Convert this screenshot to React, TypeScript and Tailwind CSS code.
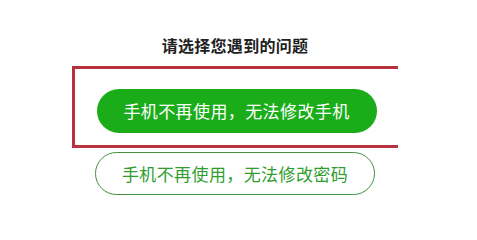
export default function App() {
  return (
    <div
      className="h-[235px] w-[477px] bg-white"
      style={{ fontFamily: '"Noto Sans CJK SC", "Noto Sans", sans-serif' }}
    >
      <div className="ml-[72px] flex w-[326px] flex-col items-center">
        <h2 className="mt-[35px] text-[16px] font-bold leading-[20px] tracking-[0.3px] text-[#222]">
          请选择您遇到的问题
        </h2>

        <div className="mt-[11px] flex w-full justify-center border-y-[3px] border-l-[3px] border-[#b8323d] pt-[20px] pb-[12px]">
          <button className="h-[44px] w-[280px] rounded-full bg-[#1aad19] text-[17px] tracking-[0.4px] text-white">
            手机不再使用，无法修改手机
          </button>
        </div>

        <button className="mt-[4px] h-[43px] w-[280px] rounded-full border border-[#3f8f3f] bg-white text-[17px] tracking-[0.4px] text-[#2f9e2f]">
          手机不再使用，无法修改密码
        </button>
      </div>
    </div>
  );
}
